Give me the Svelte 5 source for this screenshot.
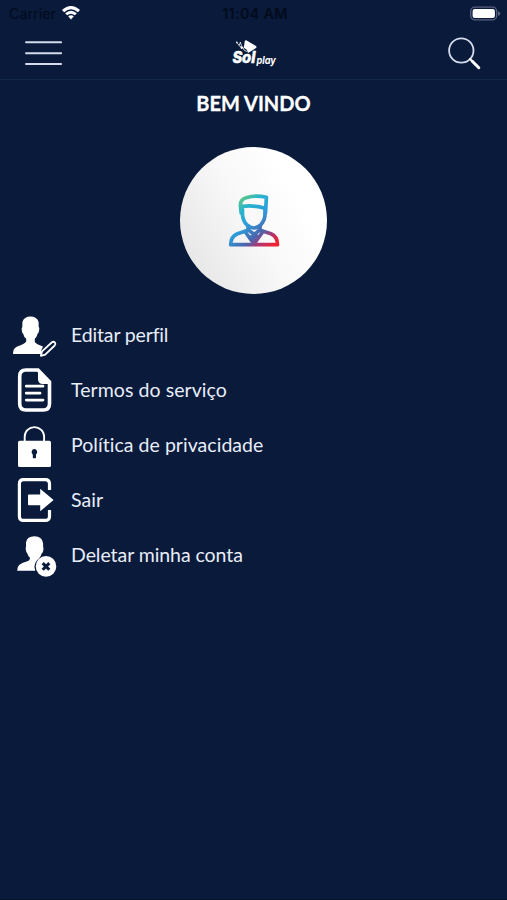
<script>
  const items = [
    { icon: 'edit', label: 'Editar perfil', spacing: -0.15 },
    { icon: 'terms', label: 'Termos do serviço', spacing: 0.06 },
    { icon: 'privacy', label: 'Política de privacidade', spacing: 0.04 },
    { icon: 'exit', label: 'Sair', spacing: 0.1 },
    { icon: 'remove', label: 'Deletar minha conta', spacing: -0.06 }
  ];
</script>

<main>
  <div class="status">
    <div class="carrier">
      <span>Carrier</span>
      <svg width="20" height="16" viewBox="0 0 20 16" fill="#fff">
        <path d="M1 5.1Q10 -3 19 5.1L16.9 7.2Q10 1.3 3.1 7.2Z" />
        <path d="M4.1 8.2Q10 3.2 15.9 8.2L13.8 10.3Q10 7.2 6.2 10.3Z" />
        <path d="M7.2 11.3Q10 9 12.8 11.3L10 14.4Z" />
      </svg>
    </div>
    <span class="time">11:04 AM</span>
    <svg class="battery" width="32" height="16" viewBox="0 0 32 16">
      <rect x="1.7" y="1.2" width="26" height="12.6" rx="4" fill="none" stroke="#59617f" stroke-width="1.3" />
      <rect x="3.6" y="3" width="22.3" height="9" rx="2" fill="#fff" />
      <path d="M29 5Q31.3 6 31.3 7.5T29 10Z" fill="#59617f" />
    </svg>
  </div>

  <header>
    <button aria-label="Menu">
      <svg width="38" height="28" viewBox="0 0 38 28" stroke="#d4dceb" stroke-width="1.9" stroke-linecap="round">
        <path d="M2 3.3H37.2M2 14.2H37.2M2 25H37.2" />
      </svg>
    </button>
    <svg class="logo" width="48" height="30" viewBox="0 0 48 30" fill="#fff">
      <path d="M14.8 2.9Q15.4 1.7 16.7 2.4L26 8Q27 9 26 10L20.5 13.6 18 15 16.8 11.8 13.8 9.8Z" />
      <path d="M6.7 4.2L9.2 7.6 10.4 4.2 11.5 7.8M9.5 8.4L13 9.5 14.2 12.2 17 13.5" fill="none" stroke="#fff" stroke-width=".8" />
      <circle cx="6.8" cy="4.4" r=".8" />
      <circle cx="11.8" cy="9.6" r="1.3" />
      <text class="sol" x="2.4" y="25" textLength="23" lengthAdjust="spacingAndGlyphs">Sol</text>
      <text class="play" x="26.4" y="25.8" textLength="19.4" lengthAdjust="spacingAndGlyphs">play</text>
    </svg>
    <button aria-label="Buscar">
      <svg width="38" height="38" viewBox="0 0 38 38" fill="none" stroke-linecap="round">
        <circle cx="16.3" cy="16.5" r="12.2" stroke="#d4dceb" stroke-width="1.8" />
        <path d="M25 25L27.3 27.3" stroke="#fff" stroke-width="2" />
        <path d="M27.3 27.3L33.8 33.7" stroke="#fff" stroke-width="3" />
      </svg>
    </button>
  </header>

  <h1>BEM VINDO</h1>

  <div class="avatar">
    <svg width="52" height="56" viewBox="0 0 52 56" fill="none" stroke="url(#tint)" stroke-width="3.7" stroke-linejoin="round" stroke-linecap="round">
      <defs>
        <linearGradient id="tint" gradientUnits="userSpaceOnUse" x1="9" y1="4" x2="47" y2="51">
          <stop offset="0" stop-color="#66c77d" />
          <stop offset=".07" stop-color="#5cc48a" />
          <stop offset=".22" stop-color="#28b5cd" />
          <stop offset=".46" stop-color="#2d9ddb" />
          <stop offset=".7" stop-color="#4a65ae" />
          <stop offset=".85" stop-color="#b7336d" />
          <stop offset="1" stop-color="#ee2330" />
        </linearGradient>
      </defs>
      <path d="M13.2 20L12.4 12.5Q12.2 6 19 4.5Q27 1.8 38.4 4.3L37.5 20M14.5 13.4Q25 11.7 37.2 15.3" />
      <path d="M14.5 16.5V22Q15 28 19 32Q22.5 35 25.8 35Q29.5 35 33 31.5Q37 27 37 21V15.5" />
      <path d="M20 33V37.3L9.4 40.7Q2.7 43.5 2.7 51.7H49.5Q49.5 43.5 43 40.7L32 37.2V33" />
      <path d="M17 38.5L26 51 35 38.5M20.5 37L29 43.5M31.5 37L23 44.5M25.9 42.5V50.5" />
    </svg>
  </div>

  <nav>
    {#each items as item}
      <a href={'#' + item.icon}>
        <svg width="71" height="55" viewBox="0 0 71 55" fill="#fff">
          {#if item.icon === 'edit'}
            <path d="M22.4 15Q24 9.5 30.5 9.5T38.6 15L38.7 20Q39.7 20.5 39 24Q38.7 26.4 37.6 26.7Q36.9 30 34.8 31.7V35Q36 37 43 39.5L41 44V47H13Q12.8 41.5 17.2 39.6Q24.7 37 26.2 34.5V31.7Q23.8 30 23.2 26.7Q22 26.2 21.8 23.5Q21.3 20.6 22.3 20Z" />
            <path d="M40.9 48.8L42 44.4 51.7 35.5Q53.3 34.1 54.9 35.5Q56.1 37 54.7 38.5L45.2 47.6Z" fill="#091a3b" stroke="#fff" stroke-width="1.8" stroke-linejoin="round" />
          {:else if item.icon === 'terms'}
            <path d="M38 8H26Q19.7 8 19.7 14.3V41.8Q19.7 48 26 48H43.2Q49.5 48 49.5 41.8V20Z" fill="none" stroke="#fff" stroke-width="3.6" />
            <path d="M38 7L51 20V22H43Q38 22 38 17Z" />
            <path d="M26.3 24.2H43M26.3 31.2H40M26.3 38.1H43" stroke="#fff" stroke-width="2.8" stroke-linecap="round" />
          {:else if item.icon === 'privacy'}
            <path d="M24.7 25V19.6A9.7 9.5 0 0 1 44.1 19.6V25" fill="none" stroke="#fff" stroke-width="1.9" />
            <rect x="18" y="23.7" width="33" height="26.4" rx="1.7" />
            <path d="M34.4 32A3 3 0 0 1 36 37.4V40.4Q36 41.3 34.4 41.3T32.8 40.4V37.4A3 3 0 0 1 34.4 32Z" fill="#091a3b" />
          {:else if item.icon === 'exit'}
            <path d="M49.5 18V12Q49.5 7.7 45.2 7.7H23.5Q19.4 7.7 19.4 12V44.2Q19.4 48.4 23.5 48.4H45.2Q49.5 48.4 49.5 44.2V38" fill="none" stroke="#fff" stroke-width="3.2" />
            <path d="M28.8 22.6H40.2V16.8L53.6 28 40.2 39.3V33.3H28.8Q28 33.3 28 32.3V23.6Q28 22.6 28.8 22.6Z" />
          {:else}
            <path d="M26 15.6Q27 9.2 34.5 9.2T43 16L43.2 20Q43.8 21 43.2 24Q42.8 26 41.8 26.3Q41.1 28.7 39.2 31.3Q34.8 34.5 34.4 40L35.3 43.8H17.2Q17 39.7 19.4 37.7Q22 35.8 28 34.1Q30 33.2 30 30.8Q27.9 29 27.2 26.3Q26.2 26 25.9 23Q25.3 20.8 26 20Z" />
            <circle cx="46" cy="39.4" r="10.3" />
            <path d="M42.7 36.1L49.3 42.7M49.3 36.1L42.7 42.7" stroke="#091a3b" stroke-width="3" />
          {/if}
        </svg>
        <span style:letter-spacing="{item.spacing}px">{item.label}</span>
      </a>
    {/each}
  </nav>
</main>

<style>
  :global(body) {
    margin: 0;
    background: #091a3b;
  }
  main {
    box-sizing: border-box;
    height: 900px;
    background: #091a3b;
    border-bottom: 1px solid #061027;
    color: #e8edf8;
    font-family: Lato, 'Open Sans', sans-serif;
    overflow: hidden;
  }
  svg {
    display: block;
    flex: none;
  }
  .status {
    height: 27px;
    padding: 0 6px 0 9px;
    display: grid;
    grid-template-columns: 1fr auto 1fr;
    align-items: center;
    box-sizing: border-box;
    color: #020a1c;
    font: 14.3px Inter, sans-serif;
  }
  .carrier {
    display: flex;
    align-items: center;
    gap: 5px;
  }
  .carrier svg {
    margin-bottom: 2px;
  }
  .time {
    font-weight: 600;
    letter-spacing: 0.35px;
  }
  .battery {
    justify-self: end;
  }
  header {
    height: 53px;
    box-sizing: border-box;
    border-bottom: 1px solid #11284a;
    padding: 0 24px 1px;
    display: flex;
    align-items: center;
    justify-content: space-between;
  }
  button {
    padding: 0;
    border: 0;
    background: none;
  }
  .sol {
    font: italic 800 16px Inter, sans-serif;
    stroke: #fff;
    stroke-width: 0.5;
  }
  .play {
    font: italic 700 10.5px Inter, sans-serif;
  }
  h1 {
    margin: 11px 0 0;
    height: 25px;
    line-height: 24px;
    text-align: center;
    font-size: 20px;
    font-weight: 700;
    color: #fff;
    -webkit-text-stroke: 0.3px #fff;
  }
  .avatar {
    width: 147px;
    height: 147px;
    margin: 31px auto 0;
    border-radius: 50%;
    display: flex;
    align-items: center;
    justify-content: center;
    background: linear-gradient(60deg, #e5e5e5 8%, #f8f8f8 48%, #fff 75%);
  }
  nav {
    margin-top: 13px;
  }
  a {
    height: 55px;
    display: flex;
    align-items: center;
    color: inherit;
    text-decoration: none;
    font-size: 19.5px;
    white-space: nowrap;
  }
  a span {
    padding-bottom: 1px;
  }
</style>
